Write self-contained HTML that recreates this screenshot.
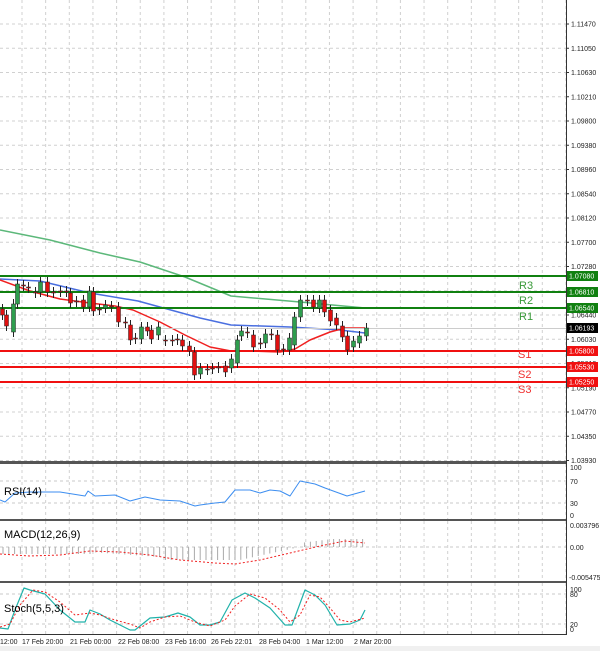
<!DOCTYPE html>
<html><head><meta charset="utf-8"><style>
html,body{margin:0;padding:0;background:#fff;width:600px;height:651px;overflow:hidden}
svg{display:block}
text{font-family:"Liberation Sans",sans-serif}
</style></head><body>
<svg id="s" width="600" height="651" viewBox="0 0 600 651" xmlns="http://www.w3.org/2000/svg">
<rect width="600" height="651" fill="#fff"/>
<g id="grid"></g>
<g id="axis" font-size="7" fill="#222"></g>
<g id="content"></g>
<rect x="0" y="461" width="567" height="3" fill="#555"/>
<rect x="0" y="519" width="567" height="2" fill="#555"/>
<rect x="0" y="581" width="567" height="2" fill="#555"/>
<line x1="566.5" y1="0" x2="566.5" y2="634" stroke="#333" stroke-width="1"/>
<line x1="0" y1="634.5" x2="567" y2="634.5" stroke="#333" stroke-width="1"/>
<rect x="0" y="646" width="600" height="5" fill="#f0f0f0"/>
<text x="4" y="495" font-size="11" fill="#000">RSI(14)</text>
<text x="4" y="538" font-size="11" fill="#000">MACD(12,26,9)</text>
<text x="4" y="612" font-size="11" fill="#000">Stoch(5,5,3)</text>
<g font-size="11" fill="#3a9a3a">
<text x="519" y="289">R3</text><text x="519" y="304">R2</text><text x="519" y="320">R1</text>
</g>
<g font-size="11" fill="#f03030">
<text x="518" y="358">S1</text><text x="518" y="378">S2</text><text x="518" y="393">S3</text>
</g>
<g font-size="7" fill="#222">
<text x="0" y="644">12:00</text><text x="22" y="644">17 Feb 20:00</text><text x="70" y="644">21 Feb 00:00</text>
<text x="118" y="644">22 Feb 08:00</text><text x="165" y="644">23 Feb 16:00</text><text x="211" y="644">26 Feb 22:01</text>
<text x="259" y="644">28 Feb 04:00</text><text x="306" y="644">1 Mar 12:00</text><text x="354" y="644">2 Mar 20:00</text>
<text x="570" y="470">100</text><text x="570" y="484">70</text><text x="570" y="506">30</text><text x="570" y="518">0</text>
<text x="570" y="528">0.003796</text><text x="570" y="550">0.00</text><text x="569" y="580">-0.005475</text>
<text x="570" y="592">100</text><text x="570" y="597">80</text><text x="570" y="627">20</text><text x="570" y="632">0</text>
</g>
</svg>
<script>
var NS="http://www.w3.org/2000/svg";
function el(p,t,a){var e=document.createElementNS(NS,t);for(var k in a)e.setAttribute(k,a[k]);p.appendChild(e);return e;}
var grid=document.getElementById('grid'),c=document.getElementById('content'),ax=document.getElementById('axis');
var prices=["1.11470","1.11050","1.10630","1.10210","1.09800","1.09380","1.08960","1.08540","1.08120","1.07700","1.07280","1.06860","1.06440","1.06030","1.05610","1.05190","1.04770","1.04350","1.03930"];
for(var i=0;i<prices.length;i++){var y=24+i*24.25;
 el(grid,'line',{x1:0,y1:y,x2:566,y2:y,stroke:'#d0d0d0','stroke-dasharray':'3,3'});
 el(ax,'line',{x1:566,y1:y,x2:569,y2:y,stroke:'#333'});
 var t=el(ax,'text',{x:571,y:y+2.5});t.textContent=prices[i];
}
for(var k=0;k<25;k++){var x=22+k*23.65;if(x>566)break;
 [[0,461],[464,519],[521,581],[583,634]].forEach(function(r){el(grid,'line',{x1:x,y1:r[0],x2:x,y2:r[1],stroke:'#d0d0d0','stroke-dasharray':'3,3'});});}
[481,503,547,594,624].forEach(function(y){el(grid,'line',{x1:0,y1:y,x2:566,y2:y,stroke:'#c8c8c8','stroke-dasharray':'3,3'});});
function poly(pts,col,w,dash){var d=pts.map(function(p){return p[0]+','+p[1];}).join(' ');var a={points:d,fill:'none',stroke:col,'stroke-width':w,'stroke-linejoin':'round'};if(dash)a['stroke-dasharray']=dash;el(c,'polyline',a);}
poly([[0,230],[50,240],[100,253],[140,262],[185,277],[231,296],[300,302],[365,308]],'#5cb87a',1.5);
poly([[0,279],[40,281],[90,293],[138,301],[200,318],[231,325],[290,327],[340,330],[365,333]],'#4a6fe0',1.5);
poly([[0,280],[30,291],[60,299],[90,303],[115,306],[133,310],[160,322],[185,335],[210,347],[231,351],[250,351],[280,352],[295,349],[310,340],[330,332],[345,328],[365,328]],'#f02020',1.5);
[276,292,308].forEach(function(y){el(c,'rect',{x:0,y:y-1,width:566,height:2,fill:'#108010'});});
[351,367,382].forEach(function(y){el(c,'rect',{x:0,y:y-1,width:566,height:2,fill:'#f01010'});});
el(c,'line',{x1:0,y1:328.5,x2:566,y2:328.5,stroke:'#ccc'});
var cd=[[2,309,315],[5,315,326],[11,332,304],[15,304,284],[20,285,286],[24,287,288],[30,292,293],[35,292,282],[41,282,292],[46,292,293],[52,291,292],[57,291,292],[61,293,303],[66,301,302],[72,300,307],[77,307,291],[81,292,311],[86,309,310],[91,308,305],[96,306,307],[102,307,322],[108,322,323],[113,325,340],[117,338,339],[122,339,327],[127,327,331],[131,330,339],[137,335,327],[143,340,341],[149,340,341],[153,339,340],[158,340,346],[164,346,351],[168,352,375],[173,374,368],[179,369,370],[184,368,369],[189,367,368],[195,366,372],[200,368,359],[205,363,340],[209,336,331],[214,332,333],[219,335,347],[225,343,344],[230,343,334],[235,334,335],[240,335,350],[245,349,350],[250,350,338],[255,345,317],[260,317,300],[266,300,301],[271,300,307],[276,308,300],[281,300,312],[286,310,321],[291,318,325],[296,326,337],[301,336,350],[306,347,341],[311,343,336],[317,336,328]];
cd.forEach(function(d){var x=Math.round(d[0]*1.154),o=d[1],cl=d[2];var up=cl<o;var t=Math.min(o,cl),b=Math.max(o,cl);
 el(c,'line',{x1:x+.5,y1:t-5,x2:x+.5,y2:b+5,stroke:'#222','stroke-width':1});
 el(c,'rect',{x:x-1.5,y:t,width:4,height:Math.max(1,b-t),fill:up?'#2e9e4e':'#e01010',stroke:'#222','stroke-width':.5});});
[[276,'1.07080','#108010'],[292,'1.06810','#108010'],[308,'1.06540','#108010'],[328,'1.06193','#000'],[351,'1.05800','#f01010'],[367,'1.05530','#f01010'],[382,'1.05250','#f01010']].forEach(function(a){
 el(c,'rect',{x:567,y:a[0]-5,width:31,height:10,fill:a[2]});var t=el(c,'text',{x:569,y:a[0]+2.5,'font-size':7,fill:'#fff'});t.textContent=a[1];});
poly([[0,500],[5,502],[15,493],[30,492],[60,492],[85,496],[88,491],[95,496],[115,495],[130,501],[145,497],[160,500],[180,501],[195,506],[200,505],[215,503],[225,502],[235,490],[250,490],[260,493],[270,490],[280,491],[290,496],[300,481],[315,484],[325,488],[347,496],[365,491]],'#3d8ef0',1);
for(var x=3;x<365;x+=5.8){var h;if(x<90)h=7;else if(x<160)h=5+(x-90)/14;else if(x<240)h=13;else if(x<300)h=13-(x-240)/4.6;else h=-(4+Math.min(4,(x-300)/8));
 el(c,'line',{x1:x,y1:547,x2:x,y2:547+h,stroke:'#aaa','stroke-width':1});}
poly([[0,554],[30,556],[60,555],[90,551],[120,552],[150,555],[180,560],[215,563],[235,564],[260,560],[290,553],[320,546],[345,541],[365,543]],'#f02020',1,'2,2');
poly([[0,628],[8,629],[15,610],[24,588],[30,590],[45,594],[60,610],[75,622],[85,622],[90,610],[100,614],[110,620],[120,625],[130,630],[135,630],[150,618],[165,617],[178,613],[190,617],[200,625],[210,625],[220,622],[232,600],[245,593],[255,598],[270,608],[285,625],[292,625],[305,590],[315,595],[325,605],[337,625],[350,624],[360,620],[365,610]],'#20b2aa',1.2);
poly([[0,627],[10,624],[20,605],[33,590],[45,592],[60,602],[75,615],[90,613],[100,615],[115,620],[130,624],[140,628],[150,622],[165,617],[180,616],[195,622],[210,626],[225,620],[235,606],[250,594],[265,598],[280,610],[290,622],[300,615],[310,595],[320,597],[330,608],[340,620],[350,622],[365,618]],'#f02020',1,'2,2');
</script>
</body></html>
